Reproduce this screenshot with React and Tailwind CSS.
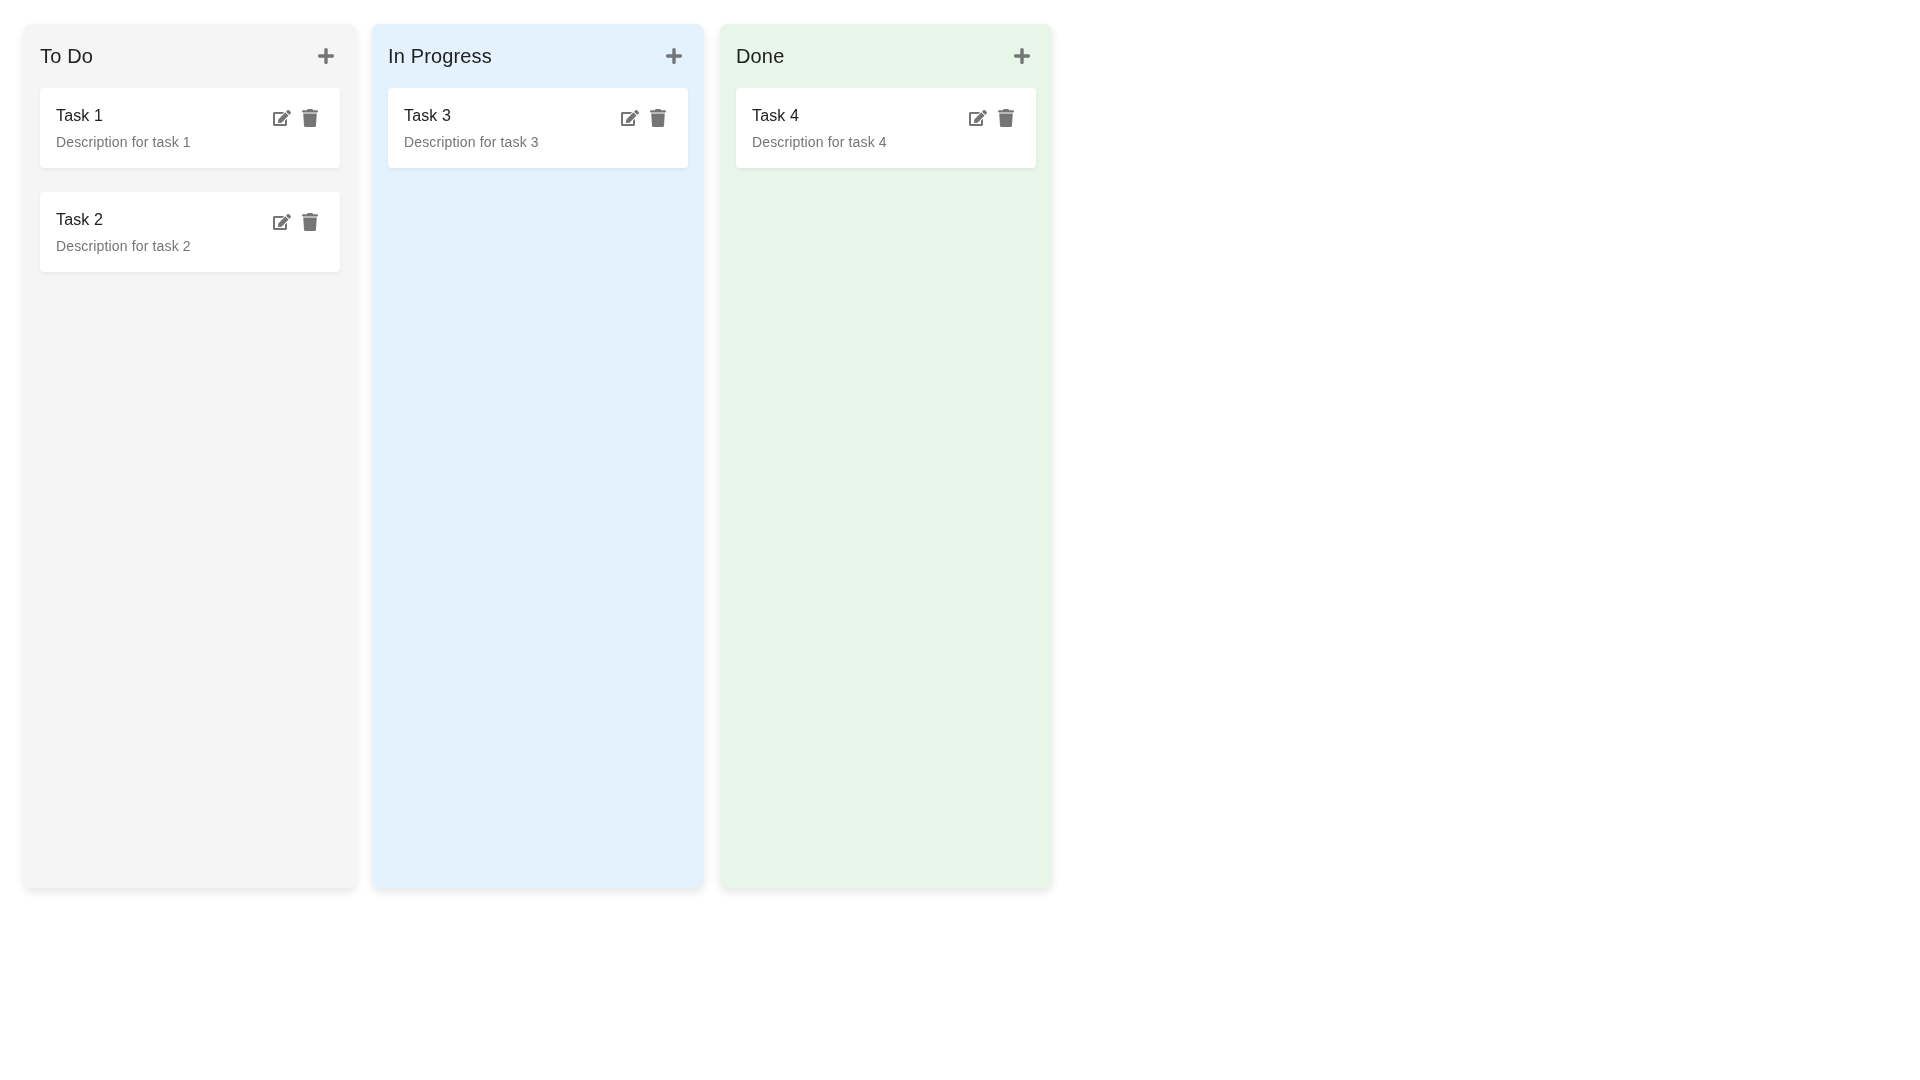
import React from 'react';
import { FaEdit, FaTrash, FaPlus } from 'react-icons/fa';

const columns = [
  { title: 'To Do', bg: 'bg-[#f5f5f5]', tasks: [{ id: 1, title: 'Task 1', description: 'Description for task 1' }, { id: 2, title: 'Task 2', description: 'Description for task 2' }] },
  { title: 'In Progress', bg: 'bg-[#e3f2fd]', tasks: [{ id: 3, title: 'Task 3', description: 'Description for task 3' }] },
  { title: 'Done', bg: 'bg-[#e8f5e9]', tasks: [{ id: 4, title: 'Task 4', description: 'Description for task 4' }] },
];

function TaskCard({ task }) {
  return (
    <div className="bg-white rounded-[4px] p-4 mb-6 h-20 flex justify-between items-start shadow-[0_2px_4px_rgba(0,0,0,0.05)]">
      <div>
        <h3 className="text-base leading-6 tracking-[0.00938em] text-[#212121]">{task.title}</h3>
        <p className="text-sm leading-5 mt-1 tracking-[0.01071em] text-[#757575]">{task.description}</p>
      </div>
      <div className="flex items-center gap-[10px] text-[#757575] pt-[5px] pr-[5px]">
        <FaEdit size={18} />
        <FaTrash size={18} />
      </div>
    </div>
  );
}

export default function App() {
  return (
    <div className="flex items-start gap-4 p-6 bg-white min-h-screen font-['Liberation_Sans',Arial,sans-serif]">
      {columns.map(col => (
        <div key={col.title} className={`w-[332px] h-[864px] p-4 rounded-lg shadow-[0_4px_8px_rgba(0,0,0,0.1)] will-change-transform ${col.bg}`}>
          <div className="flex items-center justify-between h-8 mb-4">
            <h2 className="text-xl tracking-[0.0075em] text-[#212121]">{col.title}</h2>
            <FaPlus size={18} className="text-[#757575] mr-[5px]" />
          </div>
          {col.tasks.map(t => <TaskCard key={t.id} task={t} />)}
        </div>
      ))}
    </div>
  );
}
